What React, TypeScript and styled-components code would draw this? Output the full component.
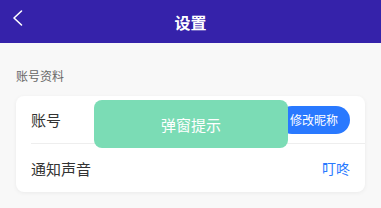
import React from "react";
import styled, { createGlobalStyle } from "styled-components";

const Global = createGlobalStyle`
  html, body { margin: 0; padding: 0; background: #f8f8f8; }
  body { font-family: "Noto Sans CJK SC", "Noto Sans", sans-serif; }
  * { box-sizing: border-box; }
`;

const Page = styled.div`
  width: 381px;
  height: 208px;
  background: #f8f8f8;
  position: relative;
  overflow: hidden;
`;

const Header = styled.div`
  height: 43px;
  background: #3522aa;
  display: flex;
  align-items: center;
  justify-content: center;
  position: relative;
`;

const Back = styled.div`
  position: absolute;
  left: 11px;
  top: 9px;
  width: 14px;
  height: 18px;
  display: flex;
`;

const Title = styled.div`
  color: #fff;
  font-size: 16px;
  font-weight: 700;
  line-height: 20px;
`;

const Section = styled.div`
  padding: 0 16px;
`;

const Label = styled.div`
  margin-top: 25px;
  font-size: 12px;
  line-height: 16px;
  color: #666;
`;

const Card = styled.div`
  margin-top: 12px;
  background: #fff;
  border-radius: 8px;
  box-shadow: 0 1px 4px rgba(0, 0, 0, 0.06);
`;

const Row = styled.div<{ $last?: boolean }>`
  height: 48px;
  margin-left: 15px;
  padding-right: 15px;
  display: flex;
  align-items: center;
  justify-content: space-between;
  border-bottom: ${(p) => (p.$last ? "none" : "1px solid #eeeeee")};
`;

const RowLabel = styled.div`
  font-size: 15px;
  color: #333;
`;

const PillButton = styled.div`
  height: 28px;
  padding: 0 12px;
  border-radius: 14px;
  background: #2979ff;
  color: #fff;
  font-size: 12px;
  display: flex;
  align-items: center;
`;

const Value = styled.div`
  font-size: 14px;
  color: #2979ff;
`;

const Toast = styled.div`
  position: absolute;
  left: 94px;
  top: 100px;
  width: 194px;
  height: 48px;
  border-radius: 8px;
  background: #7bdcb5;
  color: #fff;
  font-size: 15px;
  display: flex;
  align-items: center;
  justify-content: center;
`;

export default function App() {
  return (
    <Page>
      <Global />
      <Header>
        <Back>
          <svg width="14" height="18" viewBox="0 0 14 18">
            <path d="M10.5 2 L3 9 L10.5 16" fill="none" stroke="#fff" strokeWidth="1.6" strokeLinecap="round" strokeLinejoin="round" />
          </svg>
        </Back>
        <Title>设置</Title>
      </Header>
      <Section>
        <Label>账号资料</Label>
        <Card>
          <Row>
            <RowLabel>账号</RowLabel>
            <PillButton>修改昵称</PillButton>
          </Row>
          <Row $last>
            <RowLabel>通知声音</RowLabel>
            <Value>叮咚</Value>
          </Row>
        </Card>
      </Section>
      <Toast>弹窗提示</Toast>
    </Page>
  );
}
